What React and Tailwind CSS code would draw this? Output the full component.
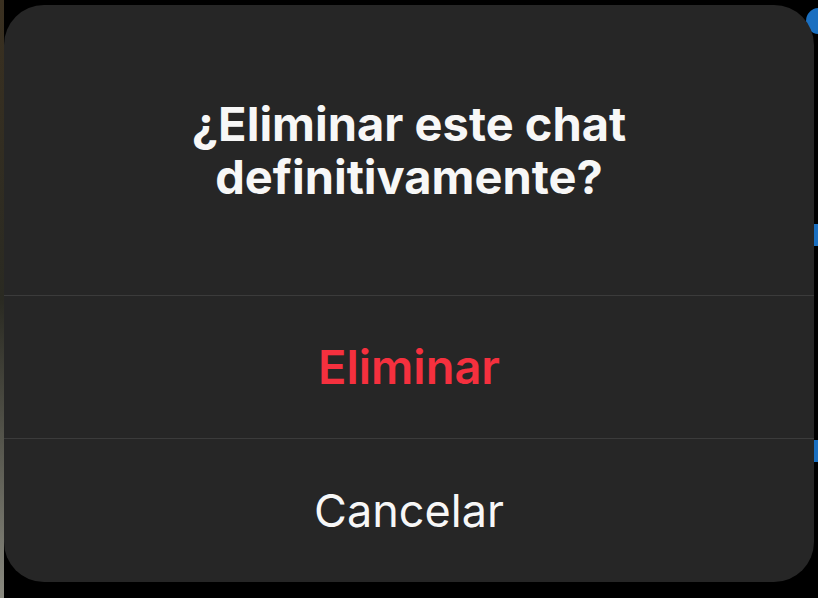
import React from 'react';

const FONT = { fontFamily: 'Inter, "Noto Sans", "Liberation Sans", sans-serif' };

const App = () => {
  return (
    <div className="relative w-[818px] h-[598px] overflow-hidden bg-black" style={FONT}>
      {/* bits of the screen behind the sheet */}
      <div className="absolute left-0 top-0 h-full w-[4px] bg-gradient-to-b from-[#3a3020] via-[#2a2a22] to-[#8a8a80]" />
      <div className="absolute left-[78px] top-[-44px] text-[44px] font-semibold leading-[48px] text-white">Hola</div>
      <div className="absolute right-[-14px] top-[8px] h-[26px] w-[26px] rounded-full bg-[#1a6fc0]" />
      <div className="absolute right-0 top-[224px] h-[22px] w-[4px] bg-[#1a6fc0]" />
      <div className="absolute right-0 top-[440px] h-[22px] w-[4px] bg-[#1a6fc0]" />

      <div className="relative pl-[4px] pt-[5px]">
        <div className="flex h-[577px] w-[810px] flex-col overflow-hidden rounded-[40px] bg-[#262626]">
          <div className="flex h-[290px] items-center justify-center px-10">
            <h2 className="text-center text-[47px] font-bold leading-[53px] text-[#f7f7f7]">
              ¿Eliminar este chat
              <br />
              definitivamente?
            </h2>
          </div>
          <div className="h-px bg-[#3b3b3b]" />
          <button type="button" className="flex h-[142px] items-center justify-center text-[47px] font-semibold text-[#f5303e]">
            Eliminar
          </button>
          <div className="h-px bg-[#3b3b3b]" />
          <button type="button" className="flex flex-1 items-center justify-center text-[45px] font-normal text-[#f7f7f7]">
            Cancelar
          </button>
        </div>
      </div>
    </div>
  );
};

export default App;
